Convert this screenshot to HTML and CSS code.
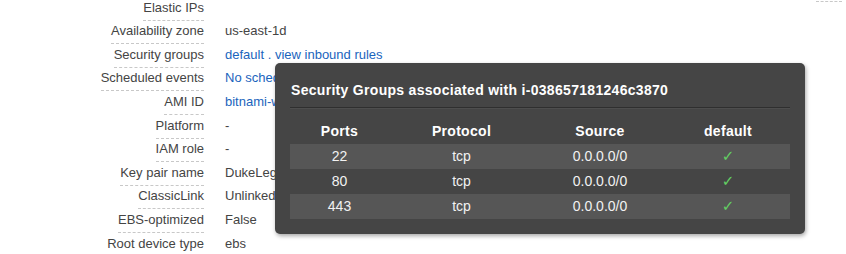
FILE: index.html
```html
<!DOCTYPE html>
<html>
<head>
<meta charset="utf-8">
<link rel="stylesheet" href="styles.css">
</head>
<body>
<div class="page">
  <div class="details">
    <div class="label"><span>Elastic IPs</span></div><div class="value"></div>
    <div class="label"><span>Availability zone</span></div><div class="value">us-east-1d</div>
    <div class="label"><span>Security groups</span></div><div class="value"><a class="link">default</a> <a class="link">.</a> <a class="link">view inbound rules</a></div>
    <div class="label"><span>Scheduled events</span></div><div class="value"><a class="link">No scheduled events</a></div>
    <div class="label"><span>AMI ID</span></div><div class="value"><a class="link">bitnami-wordpress</a></div>
    <div class="label"><span>Platform</span></div><div class="value">-</div>
    <div class="label"><span>IAM role</span></div><div class="value">-</div>
    <div class="label"><span>Key pair name</span></div><div class="value">DukeLegacy</div>
    <div class="label"><span>ClassicLink</span></div><div class="value">Unlinked</div>
    <div class="label"><span>EBS-optimized</span></div><div class="value">False</div>
    <div class="label"><span>Root device type</span></div><div class="value">ebs</div>
  </div>
  <div class="side"><span class="frag"></span></div>

  <div class="popover">
    <div class="pop-title">Security Groups associated with i-038657181246c3870</div>
    <div class="pop-sep"></div>
    <div class="sg-table">
      <div class="sg-row head"><div>Ports</div><div>Protocol</div><div>Source</div><div>default</div></div>
      <div class="sg-row odd"><div>22</div><div>tcp</div><div>0.0.0.0/0</div><div class="check">✓</div></div>
      <div class="sg-row"><div>80</div><div>tcp</div><div>0.0.0.0/0</div><div class="check">✓</div></div>
      <div class="sg-row odd"><div>443</div><div>tcp</div><div>0.0.0.0/0</div><div class="check">✓</div></div>
    </div>
  </div>
</div>
</body>
</html>
```

FILE: styles.css
```css
html, body {
  margin: 0;
  padding: 0;
  background: #fff;
}
body {
  font-family: "Liberation Sans", Arial, sans-serif;
  font-size: 13px;
  color: #444;
  width: 846px;
  height: 254px;
  overflow: hidden;
}
.page {
  position: relative;
  display: flex;
  justify-content: space-between;
  height: 254px;
}
.details {
  display: grid;
  grid-template-columns: 204px auto;
  column-gap: 21px;
  grid-auto-rows: 23.6px;
  margin-top: -3px;
  align-self: flex-start;
}
.label {
  text-align: right;
  white-space: nowrap;
}
.label span {
  display: inline-block;
  line-height: 18px;
  padding-top: 1.6px;
  padding-bottom: 3px;
  border-bottom: 1px dashed #c8c8c8;
}
.value {
  line-height: 18px;
  padding-top: 1.6px;
  white-space: nowrap;
}
.link {
  color: #1a64bd;
  text-decoration: none;
}
.side {
  padding-right: 4px;
}
.frag {
  display: block;
  width: 26px;
  height: 1px;
  border-bottom: 1px dashed #c8c8c8;
}
.popover {
  position: absolute;
  left: 275px;
  top: 63px;
  width: 530px;
  box-sizing: border-box;
  padding: 18px 15px 15px;
  background: #454545;
  border-radius: 5px;
  box-shadow: 1px 2px 4px rgba(0, 0, 0, 0.35);
  color: #f2f2f2;
  font-size: 14px;
}
.pop-title {
  font-weight: bold;
  letter-spacing: 0.3px;
  line-height: 18px;
  color: #fff;
  padding-left: 1px;
  white-space: nowrap;
}
.pop-sep {
  margin-top: 8px;
  height: 1px;
  background: #2f2f2f;
  border-bottom: 1px solid #4e4e4e;
}
.sg-table {
  margin-top: 10px;
}
.sg-row {
  display: grid;
  grid-template-columns: 99px 145px 132px 124px;
  height: 25px;
  line-height: 25px;
  text-align: center;
}
.sg-row.head {
  font-weight: bold;
  letter-spacing: 0.3px;
  color: #fff;
}
.sg-row.odd {
  background: #565656;
}
.check {
  color: #63d063;
  font-family: "DejaVu Sans", sans-serif;
  font-size: 15px;
}
```
